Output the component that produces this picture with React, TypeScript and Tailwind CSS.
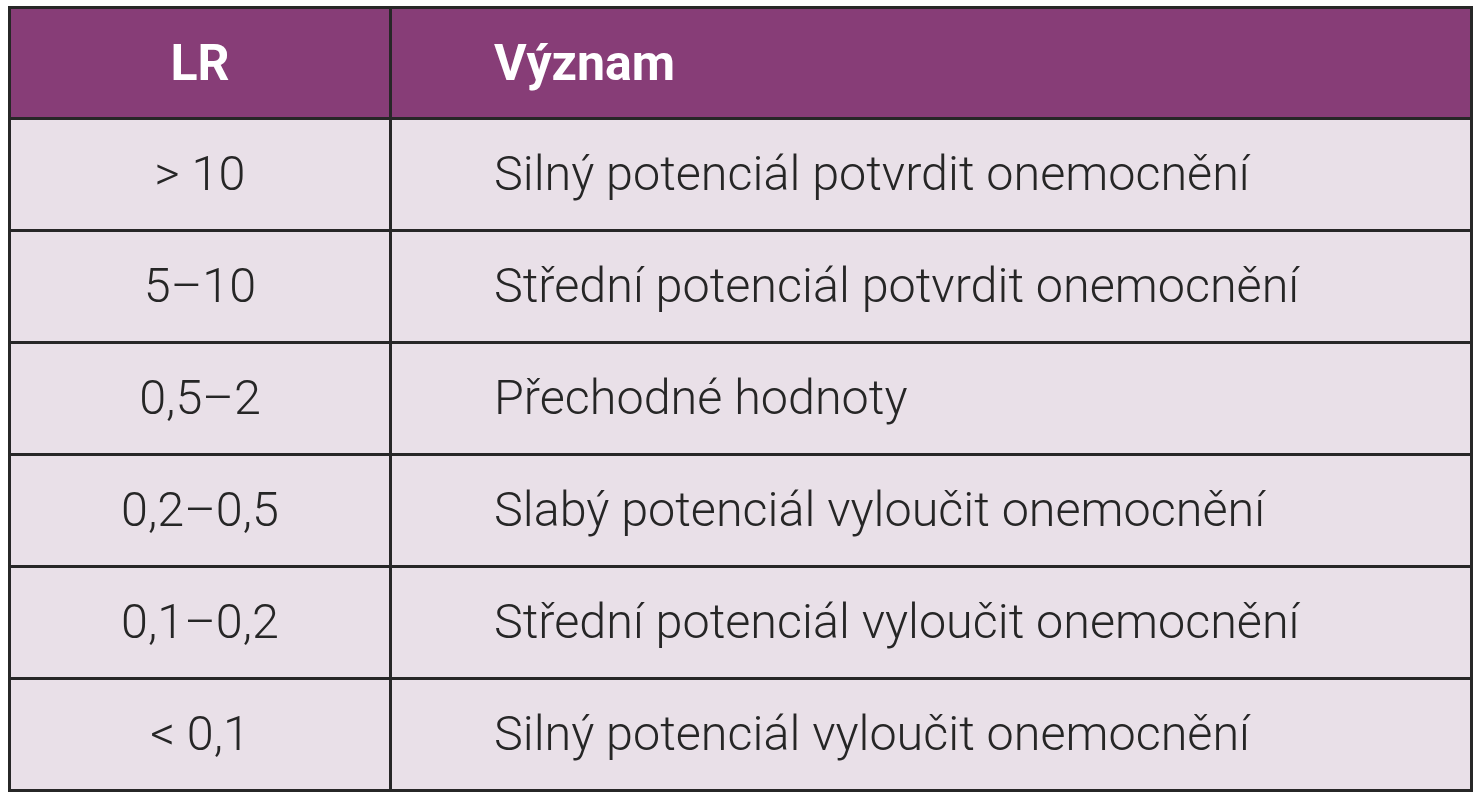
import React from 'react'

const rows: [string, string][] = [
  ['> 10', 'Silný potenciál potvrdit onemocnění'],
  ['5–10', 'Střední potenciál potvrdit onemocnění'],
  ['0,5–2', 'Přechodné hodnoty'],
  ['0,2–0,5', 'Slabý potenciál vyloučit onemocnění'],
  ['0,1–0,2', 'Střední potenciál vyloučit onemocnění'],
  ['< 0,1', 'Silný potenciál vyloučit onemocnění']
]

const Row: React.FC<{ lr: string; text: string }> = ({ lr, text }) => (
  <div className="flex h-[112px] border-t-[3px] border-[#272727] bg-[#e9e0e8]">
    <div className="w-[381px] shrink-0 flex items-center justify-center border-r-[3px] border-[#272727]">
      {lr}
    </div>
    <div className="flex-1 flex items-center pl-[102px]">{text}</div>
  </div>
)

export default function App() {
  return (
    <div className="min-h-[800px] bg-white pt-[6px] pl-[8px] font-['Roboto',sans-serif] font-light text-[48.5px] text-[#262626]">
      <div className="w-[1465px] border-[3px] border-[#272727]">
        <div className="flex h-[108px] bg-[#873d77] text-white font-bold text-[50px]">
          <div className="w-[381px] shrink-0 flex items-center justify-center border-r-[3px] border-[#272727]">
            LR
          </div>
          <div className="flex-1 flex items-center pl-[102px]">Význam</div>
        </div>
        {rows.map(([lr, text]) => (
          <Row key={lr} lr={lr} text={text} />
        ))}
      </div>
    </div>
  )
}
